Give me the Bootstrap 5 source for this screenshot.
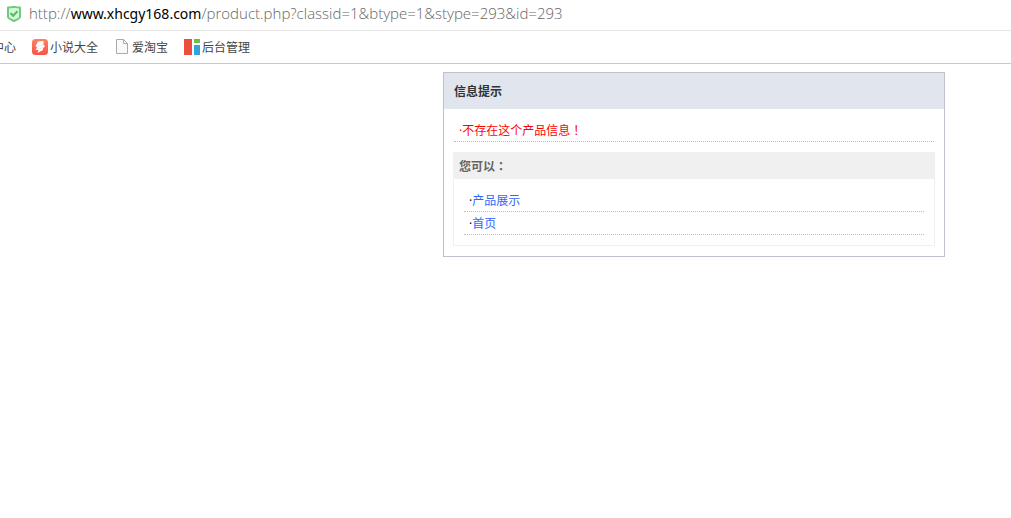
<!DOCTYPE html>
<html lang="zh-CN">
<head>
<meta charset="utf-8">
<meta name="viewport" content="width=device-width, initial-scale=1">
<title>信息提示</title>
<link href="https://cdn.jsdelivr.net/npm/bootstrap@5.3.0/dist/css/bootstrap.min.css" rel="stylesheet">
<style>
body { font: 12px/22px "Open Sans", "Noto Sans CJK SC", sans-serif; color: #333; overflow-x: hidden; }
a { text-decoration: none; }
.address { height: 31px; padding: 0 7px 2px; gap: 8px; border-bottom: 1px solid #e6e6e6; }
.url { font: 300 15px/26px "Open Sans", sans-serif; color: #666; white-space: nowrap; outline: 0; padding-bottom: 2px; }
.url b { font: 400 14px/26px "Noto Sans", sans-serif; color: #000; }
.bookmarks { height: 33px; gap: 16px; border-bottom: 1px solid #c8c8c8; margin-left: -8px; white-space: nowrap; }
.bookmarks a { color: #444; display: flex; align-items: center; gap: 2px; }
.bookmarks span { padding-top: 2px; line-height: 20px; }
.stage { padding: 8px 66px 0 8px; }
.notice { width: 100%; max-width: 502px; border: 1px solid #bcc1cb; }
.notice-title { font-size: 12px; line-height: 34px; font-weight: 700; padding: 2px 10px 0; background: #e0e5ee; color: #333; }
.notice-body { padding: 10px 9px; }
.dotted { border-bottom: 1px dotted #c0c0c0; padding: 1px 5px 0; line-height: 21px; }
.notice-body > .dotted { margin: 0 1px 10px; }
.options { border: 1px solid #f0f0f0; }
.options h2 { font-size: 12px; line-height: 24px; font-weight: 700; color: #666; background: #f0f0f0; padding: 2px 5px 0; }
.options ul { padding: 10px; color: #000; }
.options a { color: #36f; }
.dotted.alert-line { color: #f00; }
.centred { font-family: "Noto Sans CJK TC", sans-serif; line-height: 1; }
</style>
</head>
<body>
<header>
  <div class="address d-flex align-items-center">
    <svg width="14" height="16" viewBox="0 0 14 16" aria-hidden="true"><path d="M1 1.5Q4 1.5 7 .8q3 .7 6 .7v9.2Q13 12.500 7 15 1 12.500 1 10.700z" fill="#d5f8d7" stroke="#6ccb7d" stroke-width="2" stroke-linejoin="round"/><path d="m3.500 7 2.700 2.800 4.300-4.500" fill="none" stroke="#55b967" stroke-width="2"/></svg>
    <div class="url" role="textbox" aria-label="地址" contenteditable="true" spellcheck="false">http://<b>www.xhcgy168.com</b>/product.php?classid=1&amp;btype=1&amp;stype=293&amp;id=293</div>
  </div>
  <nav class="bookmarks d-flex align-items-center" aria-label="书签">
    <a href="#"><span>中心</span></a>
    <a href="#"><svg width="16" height="16" viewBox="0 0 16 16" aria-hidden="true"><defs><linearGradient id="coral" x2="0" y2="1"><stop stop-color="#ff8068"/><stop offset="1" stop-color="#f75443"/></linearGradient></defs><rect width="16" height="16" rx="3.500" fill="url(#coral)"/><path d="M6 2.500 11.500 2v4l1.500 1-2 2.500v1.500L5.500 14l1-3H3.500L5 8.500 3.500 7z" fill="#fff"/><path d="m5.500 7.500 5.500-2M6 10.500l5-2" stroke="#ffd5ce" stroke-width=".7"/></svg><span>小说大全</span></a>
    <a href="#"><svg width="16" height="16" viewBox="0 0 16 16" aria-hidden="true"><path d="M2.500.5h7l4 4v10h-11zM9.500.5v4h4" fill="#fafafa" stroke="#aaa"/></svg><span>爱淘宝</span></a>
    <a href="#"><svg width="16" height="16" viewBox="0 0 16 16" aria-hidden="true"><path fill="#e94f3b" d="M0 0h8v16H0z"/><path fill="#72be44" d="M10 0h6v4h-6z"/><path fill="#30a4e0" d="M10 6h6v10h-6z"/></svg><span>后台管理</span></a>
  </nav>
</header>
<main class="stage d-flex justify-content-end">
  <section class="notice">
    <h1 class="notice-title m-0">信息提示</h1>
    <div class="notice-body">
      <div class="dotted alert-line">·不存在这个产品信息<span class="centred" lang="zh-TW">！</span></div>
      <div class="options">
        <h2 class="m-0">您可以<span class="centred" lang="zh-TW">：</span></h2>
        <ul class="list-unstyled m-0">
          <li class="dotted">·<a href="#">产品展示</a></li>
          <li class="dotted">·<a href="#">首页</a></li>
        </ul>
      </div>
    </div>
  </section>
</main>
<script src="https://cdn.jsdelivr.net/npm/bootstrap@5.3.0/dist/js/bootstrap.bundle.min.js"></script>
</body>
</html>
